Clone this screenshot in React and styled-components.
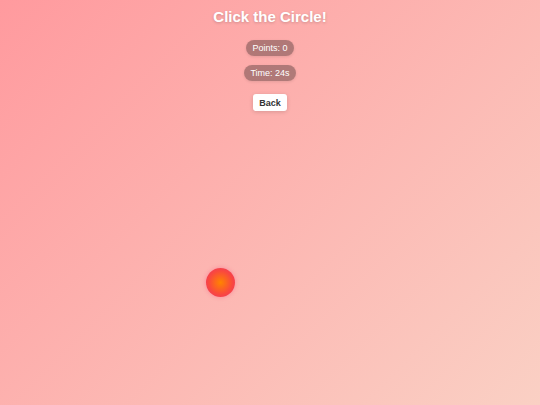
import React from "react";
import styled, { createGlobalStyle } from "styled-components";

const Global = createGlobalStyle`
  html, body { margin: 0; padding: 0; height: 100%; }
  body { font-family: "Liberation Sans", Arial, sans-serif; }
  #root { height: 100%; }
`;

const Page = styled.div`
  position: relative;
  width: 540px;
  height: 405px;
  overflow: hidden;
  background: linear-gradient(135deg, #ff9a9e 0%, #fad0c4 100%);
  display: flex;
  flex-direction: column;
  align-items: center;
  padding-top: 8px;
  box-sizing: border-box;
`;

const Title = styled.h1`
  margin: 0;
  font-size: 15px;
  line-height: 18px;
  font-weight: bold;
  color: #fff;
  text-shadow: 0 1px 3px rgba(0, 0, 0, 0.2);
`;

const Pill = styled.div`
  margin-top: ${(p) => p.$mt}px;
  background: rgba(0, 0, 0, 0.3);
  color: #fff;
  font-size: 9px;
  line-height: 10px;
  padding: 3px 6px;
  border-radius: 8px;
  box-shadow: 0 1px 3px rgba(0, 0, 0, 0.1);
`;

const BackButton = styled.button`
  margin-top: 13px;
  background: #fff;
  color: #333;
  border: none;
  font-family: "Liberation Sans", Arial, sans-serif;
  font-size: 9px;
  font-weight: bold;
  line-height: 10px;
  padding: 4px 6px 3px;
  border-radius: 3px;
  box-shadow: 0 1px 4px rgba(0, 0, 0, 0.15);
  cursor: pointer;
`;

const Target = styled.div`
  position: absolute;
  width: 29px;
  height: 29px;
  border-radius: 50%;
  background: radial-gradient(circle, #ff8400 0%, #fa4a3c 55%, #ec306c 100%);
  box-shadow: 0 0 4px rgba(240, 50, 100, 0.35);
  cursor: pointer;
`;

export default function App() {
  return (
    <>
      <Global />
      <Page>
        <Title>Click the Circle!</Title>
        <Pill $mt={14}>Points: 0</Pill>
        <Pill $mt={9}>Time: 24s</Pill>
        <BackButton>Back</BackButton>
        <Target style={{ left: 206, top: 268 }} />
      </Page>
    </>
  );
}
